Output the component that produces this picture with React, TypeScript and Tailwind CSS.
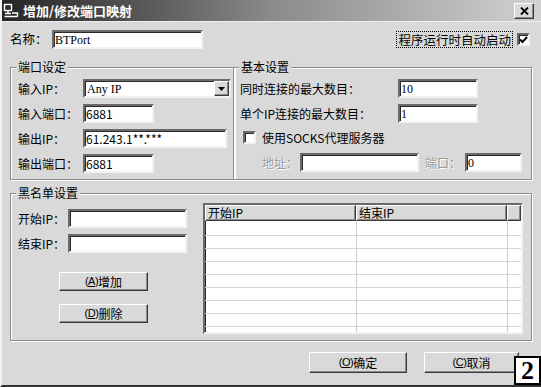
import React from 'react';

const sunken =
  'bg-white border-2 border-t-[#6a6a6a] border-l-[#6a6a6a] border-b-[#f2f2f2] border-r-[#f2f2f2] shadow-[inset_1px_1px_0_#2a2a2a]';
const raised =
  'bg-[#d9d9d9] border border-t-white border-l-white border-b-[#3a3a3a] border-r-[#3a3a3a] shadow-[inset_-1px_-1px_0_#8a8a8a]';
const etched = 'border border-[#8c8c8c] shadow-[inset_1px_1px_0_#fff,1px_1px_0_#fff]';

const Field: React.FC<{ w: string; value?: string; serif?: boolean }> = ({ w, value, serif }) => (
  <div className={`${sunken} ${w} h-[19px] flex items-center pl-[1px] text-[12px] leading-none ${serif ? "font-['Liberation_Serif',serif]" : ''}`}>
    {value}
  </div>
);

const Group: React.FC<{ title: string; className: string; children: React.ReactNode }> = ({ title, className, children }) => (
  <div className={`relative ${etched} ${className}`}>
    <span className="absolute -top-[8px] left-[5px] px-[2px] bg-[#d9d9d9] text-[12px] leading-[14px]">{title}</span>
    {children}
  </div>
);

const Check: React.FC<{ checked?: boolean }> = ({ checked }) => (
  <div className={`${sunken} w-[13px] h-[13px] flex items-center justify-center`}>
    {checked && (
      <svg width="9" height="8" viewBox="0 0 9 8">
        <path d="M1 3.5 L3.5 6 L8 1" stroke="#000" strokeWidth="2" fill="none" />
      </svg>
    )}
  </div>
);

const Button: React.FC<{ w: string; children: React.ReactNode; className?: string }> = ({ w, children, className = '' }) => (
  <div className={`${raised} ${w} flex items-center justify-center text-[12px] ${className}`}>{children}</div>
);

const Key: React.FC<{ k: string }> = ({ k }) => (
  <span className="text-[11px] tracking-[-0.5px] font-['Liberation_Sans',sans-serif]">
    (<span className="underline">{k}</span>)
  </span>
);

export default function App() {
  const rows = Array.from({ length: 8 });
  return (
    <div className="relative w-[541px] h-[387px] bg-[#d9d9d9] flex flex-col overflow-hidden border-l-2 border-l-[#f4f4f4] border-b-2 border-b-[#333] text-black font-['Noto_Sans_CJK_SC','Noto_Sans',sans-serif]">
      {/* title bar */}
      <div className="h-[22px] -ml-[2px] flex items-center bg-linear-to-r from-[#252525] via-[#8a8a8a] to-[#d2d2d2] border-b border-b-[#efefef]">
        <svg width="16" height="16" viewBox="0 0 16 16" className="ml-[3px] mr-[4px]">
          <rect x="1.5" y="1.5" width="7" height="6" fill="none" stroke="#fff" strokeWidth="1.4" />
          <path d="M2 10.5 H8 M5 8 V10.5 M1.5 13.5 H14.5 M9 10 H14.5 V13.5" stroke="#fff" strokeWidth="1.4" fill="none" />
        </svg>
        <span className="text-white font-bold text-[13px] leading-none">增加/修改端口映射</span>
        <div className={`${raised} ml-auto mr-[7px] w-[20px] h-[16px] flex items-center justify-center`}>
          <svg width="9" height="8" viewBox="0 0 9 8">
            <path d="M1 0.5 L8 7.5 M8 0.5 L1 7.5" stroke="#000" strokeWidth="1.8" />
          </svg>
        </div>
      </div>

      <div className="pl-[8px] flex flex-col">
        {/* name row */}
        <div className="mt-[8px] h-[19px] flex items-center">
          <span className="w-[42px] text-[12.5px]">名称：</span>
          <Field w="w-[151px]" value="BTPort" serif />
          <span className="ml-auto text-[12.5px] leading-[15px] px-[1px] outline outline-1 outline-dotted outline-black">程序运行时自动启动</span>
          <div className="ml-[5px] mr-[11px]">
            <Check checked />
          </div>
        </div>

        {/* two groups */}
        <div className="mt-[18px] flex">
          <Group title="端口设定" className="w-[225px] h-[113px] pl-[7px] pt-[11px] flex flex-col gap-[6px]">
            <div className="h-[19px] flex items-center">
              <span className="w-[65px] text-[12px]">输入IP：</span>
              <div className={`${sunken} w-[148px] h-[19px] flex items-center`}>
                <span className="pl-[2px] text-[12px] font-['Liberation_Serif',serif]">Any IP</span>
                <div className={`${raised} ml-auto w-[15px] h-[15px] flex items-center justify-center`}>
                  <svg width="7" height="4" viewBox="0 0 7 4">
                    <path d="M0 0 H7 L3.5 4 Z" fill="#000" />
                  </svg>
                </div>
              </div>
            </div>
            <div className="h-[19px] flex items-center">
              <span className="w-[65px] text-[12px]">输入端口：</span>
              <Field w="w-[71px]" value="6881" />
            </div>
            <div className="h-[19px] flex items-center">
              <span className="w-[65px] text-[12px]">输出IP：</span>
              <Field w="w-[144px]" value="61.243.1**.***" />
            </div>
            <div className="h-[19px] flex items-center">
              <span className="w-[65px] text-[12px]">输出端口：</span>
              <Field w="w-[71px]" value="6881" />
            </div>
          </Group>

          <Group title="基本设置" className="-ml-[2px] w-[299px] h-[113px] pl-[6px] pt-[11px] flex flex-col">
            <div className="h-[19px] flex items-center">
              <span className="w-[158px] text-[12px]">同时连接的最大数目：</span>
              <Field w="w-[80px]" value="10" serif />
            </div>
            <div className="mt-[6px] h-[19px] flex items-center">
              <span className="w-[158px] text-[12px]">单个IP连接的最大数目：</span>
              <Field w="w-[80px]" value="1" serif />
            </div>
            <div className="mt-[8px] h-[13px] flex items-center pl-[3px]">
              <Check />
              <span className="ml-[6px] text-[12px]">使用SOCKS代理服务器</span>
            </div>
            <div className="mt-[9px] h-[19px] flex items-center pl-[22px]">
              <span className="w-[38px] text-[12px] text-[#9a9a9a] [text-shadow:1px_1px_0_#fff]">地址：</span>
              <Field w="w-[119px]" />
              <span className="ml-[6px] w-[40px] text-[12px] text-[#9a9a9a] [text-shadow:1px_1px_0_#fff]">端口：</span>
              <Field w="w-[57px]" value="0" serif />
            </div>
          </Group>
        </div>

        {/* blacklist */}
        <Group title="黑名单设置" className="mt-[13px] w-[522px] h-[148px] flex">
          <div className="w-[192px] pl-[7px] pt-[15px] flex flex-col">
            <div className="h-[19px] flex items-center">
              <span className="w-[50px] text-[12px]">开始IP：</span>
              <Field w="w-[119px]" />
            </div>
            <div className="mt-[6px] h-[19px] flex items-center">
              <span className="w-[50px] text-[12px]">结束IP：</span>
              <Field w="w-[119px]" />
            </div>
            <Button w="w-[89px] h-[19px]" className="ml-[41px] mt-[19px]">
              <Key k="A" />增加
            </Button>
            <Button w="w-[89px] h-[19px]" className="ml-[41px] mt-[13px]">
              <Key k="D" />删除
            </Button>
          </div>
          <div className={`${sunken} mt-[9px] w-[320px] h-[131px] flex flex-col overflow-hidden`}>
            <div className="h-[16px] flex shrink-0 text-[12px] leading-[14px]">
              <div className={`${raised} w-[151px] pl-[2px]`}>开始IP</div>
              <div className={`${raised} w-[151px] pl-[2px]`}>结束IP</div>
              <div className={`${raised} flex-1`}></div>
            </div>
            <div className="relative flex-1 pt-[2px]">
              {rows.map((_, i) => (
                <div key={i} className="h-[13px] border-b border-b-[#d6d6d6]" />
              ))}
              <div className="absolute top-0 bottom-0 left-[151px] w-px bg-[#cfcfcf]" />
              <div className="absolute top-0 bottom-0 left-[302px] w-px bg-[#cfcfcf]" />
            </div>
          </div>
        </Group>

        {/* bottom buttons */}
        <div className="mt-[11px] flex justify-end pr-[22px] gap-[17px]">
          <Button w="w-[98px] h-[21px]">
            <Key k="O" />确定
          </Button>
          <Button w="w-[95px] h-[21px]">
            <Key k="C" />取消
          </Button>
        </div>
      </div>

      <div className="absolute right-0 bottom-0 w-[27px] h-[29px] bg-white border-2 border-black flex items-center justify-center text-[26px] font-bold leading-none font-['Liberation_Serif',serif]">
        2
      </div>
    </div>
  );
}
